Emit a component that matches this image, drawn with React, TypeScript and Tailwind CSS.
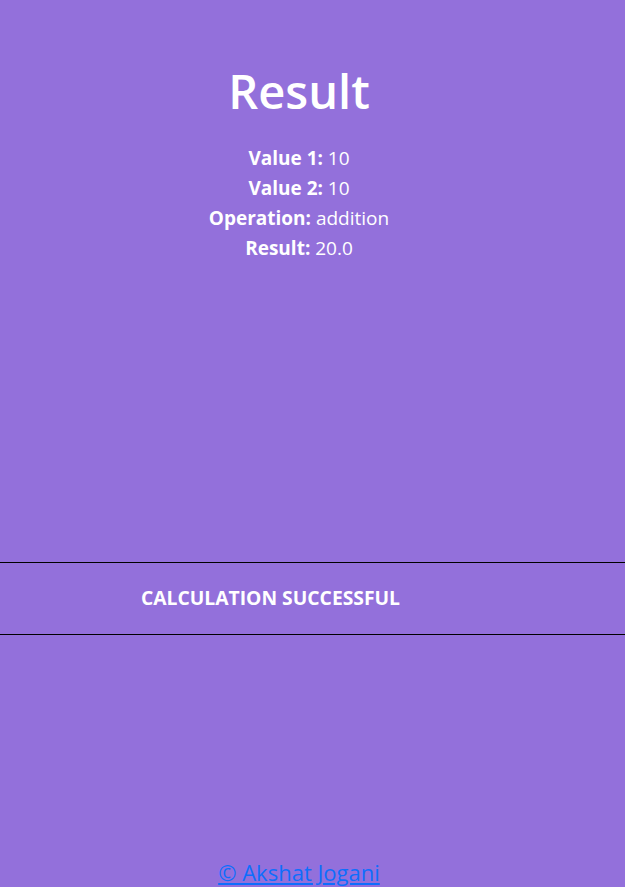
export default function App() {
  return (
    <div className="min-h-[887px] w-full bg-[#9370db] text-white flex flex-col" style={{ fontFamily: '"Open Sans", "Noto Sans", sans-serif' }}>
      <div className="flex flex-col items-center pt-[63px] pr-[27px]">
        <h1 className="text-[47px] leading-[1.2] font-semibold">Result</h1>
        <div className="mt-[24px] flex flex-col items-center text-[19px] leading-[30px]">
          <p><b className="font-bold">Value 1:</b> 10</p>
          <p><b className="font-bold">Value 2:</b> 10</p>
          <p><b className="font-bold">Operation:</b> addition</p>
          <p><b className="font-bold">Result:</b> 20.0</p>
        </div>
      </div>
      <div className="mt-[299px] h-[73px] border-y border-black flex items-center pl-[141px]">
        <span className="text-[19.3px] font-bold">CALCULATION SUCCESSFUL</span>
      </div>
      <div className="flex-1" />
      <div className="flex justify-center pr-[27px]">
        <a href="#" className="text-[22px] leading-[30px] text-[#0d6efd] underline">© Akshat Jogani</a>
      </div>
    </div>
  );
}
